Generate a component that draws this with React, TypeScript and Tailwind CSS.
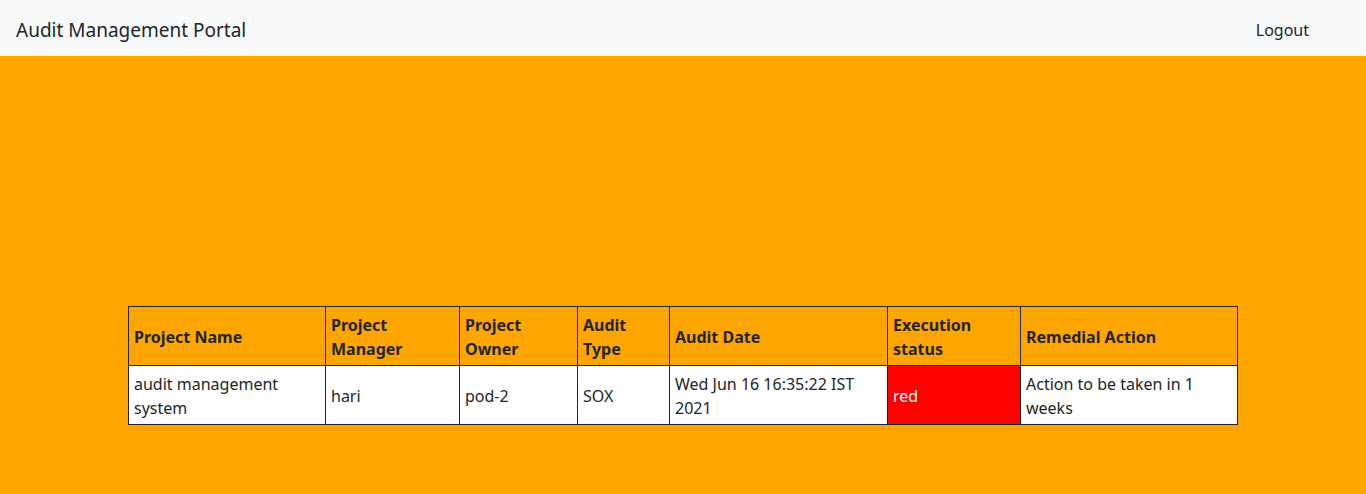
import React from 'react';

const columns = [
  { label: 'Project Name', width: 'w-[197px]' },
  { label: 'Project Manager', width: 'w-[134px]' },
  { label: 'Project Owner', width: 'w-[118px]' },
  { label: 'Audit Type', width: 'w-[92px]' },
  { label: 'Audit Date', width: 'w-[218px]' },
  { label: 'Execution status', width: 'w-[133px]' },
  { label: 'Remedial Action', width: 'w-[217px]' },
];

const row = {
  projectName: 'audit management system',
  manager: 'hari',
  owner: 'pod-2',
  auditType: 'SOX',
  date: 'Wed Jun 16 16:35:22 IST 2021',
  status: 'red',
  action: 'Action to be taken in 1 weeks',
};

const cell = 'border border-[#212529] pl-[5px] pr-[4px] pt-[6px] pb-[4px] align-middle text-left';

const App = () => {
  return (
    <div className="min-h-[494px] bg-[#ffa500] text-[#212529] text-[16px] leading-[24px] font-['Noto_Sans',sans-serif]">
      <nav className="h-[56px] bg-[#f8f9fa] flex items-center justify-between pt-[3px] pl-4 pr-[57px]">
        <span className="text-[19px] leading-[30px]">Audit Management Portal</span>
        <a className="text-[16px] text-[#212529] cursor-pointer">Logout</a>
      </nav>

      <div className="pt-[250px] pb-[69px]">
        <table className="mx-auto w-[1109px] table-fixed border-collapse">
          <thead>
            <tr>
              {columns.map((c) => (
                <th key={c.label} className={`${cell} ${c.width} font-bold`}>
                  {c.label}
                </th>
              ))}
            </tr>
          </thead>
          <tbody>
            <tr className="bg-white">
              <td className={cell}>{row.projectName}</td>
              <td className={cell}>{row.manager}</td>
              <td className={cell}>{row.owner}</td>
              <td className={cell}>{row.auditType}</td>
              <td className={cell}>{row.date}</td>
              <td className={`${cell} bg-[#ff0000] text-white`}>{row.status}</td>
              <td className={cell}>{row.action}</td>
            </tr>
          </tbody>
        </table>
      </div>
    </div>
  );
};

export default App;
